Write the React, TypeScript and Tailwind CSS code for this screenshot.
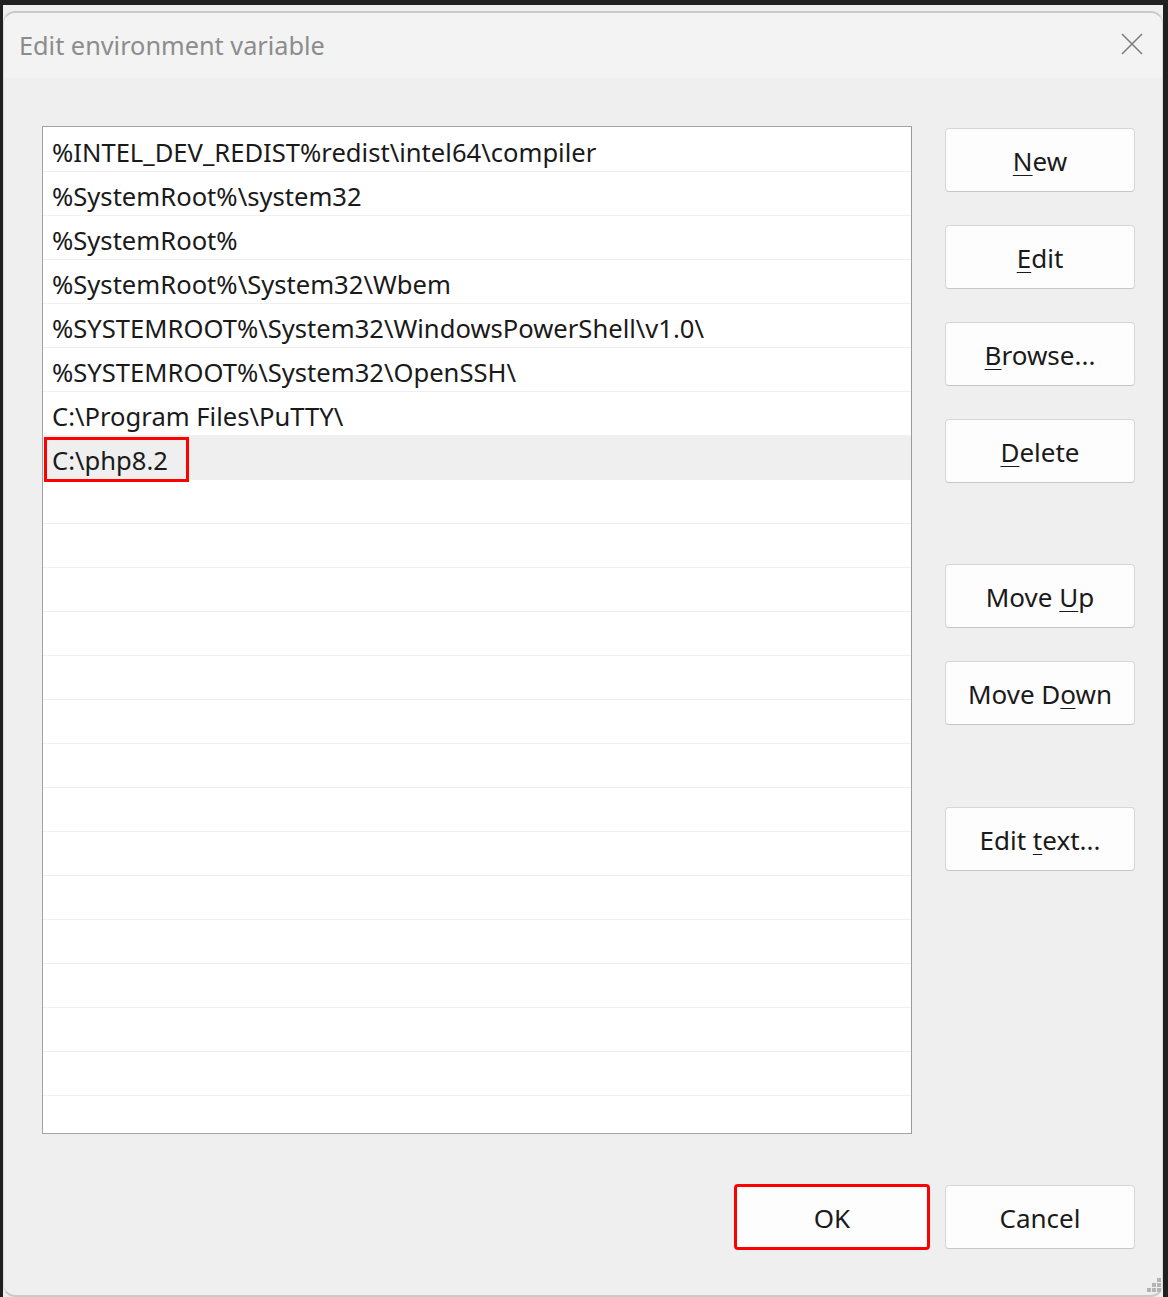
import { ReactNode } from "react";

// Edit environment variable — Windows 11 style dialog

const paths = [
  "%INTEL_DEV_REDIST%redist\\intel64\\compiler",
  "%SystemRoot%\\system32",
  "%SystemRoot%",
  "%SystemRoot%\\System32\\Wbem",
  "%SYSTEMROOT%\\System32\\WindowsPowerShell\\v1.0\\",
  "%SYSTEMROOT%\\System32\\OpenSSH\\",
  "C:\\Program Files\\PuTTY\\",
  "C:\\php8.2",
];

const TOTAL_ROWS = 23;
const SELECTED = 7;

function WinButton({
  children,
  className = "",
}: {
  children: ReactNode;
  className?: string;
}) {
  return (
    <button
      className={`flex h-[64px] w-[190px] items-center justify-center rounded-[4px] border border-[#d6d6d6] border-b-[#c6c6c6] bg-[#fdfdfd] pt-[3px] text-[26px] text-[#1a1a1a] ${className}`}
    >
      <span className="whitespace-pre">{children}</span>
    </button>
  );
}

// underlined access key
function K({ children }: { children: ReactNode }) {
  return <span className="underline decoration-1 underline-offset-[4px]">{children}</span>;
}

export default function App() {
  const rows = Array.from({ length: TOTAL_ROWS }, (_, i) => paths[i] ?? "");

  return (
    <div
      className="h-[1297px] w-[1168px] bg-[#202020] pl-[3px] pr-[5px] pt-[5px]"
      style={{ fontFamily: '"Noto Sans", "Open Sans", sans-serif' }}
    >
      <div className="h-full bg-[#efefef] pt-[6px]">
        <div className="relative flex h-full flex-col rounded-[12px] border-x border-y-2 border-x-[#dadada] border-y-[#c9c9c9] bg-[#efefef]">
          {/* title bar */}
          <div className="flex h-[65px] items-center justify-between rounded-t-[12px] bg-[#f3f3f3] pl-[15px] pr-[19px]">
            <span className="text-[25.3px] text-[#8c8c8c]">Edit environment variable</span>
            <svg width="22" height="22" viewBox="0 0 22 22" className="mt-[-4px]">
              <path d="M1 1 L21 21 M21 1 L1 21" stroke="#7d7d7d" strokeWidth="1.6" fill="none" />
            </svg>
          </div>

          {/* body */}
          <div className="flex pl-[38px] pt-[48px]">
            <div className="h-[1008px] w-[870px] overflow-hidden border border-[#a3a3a3] border-r-[#9a9a9a] bg-white pt-[1px]">
              {rows.map((p, i) => (
                <div
                  key={i}
                  className={`relative flex h-[44px] items-center border-b border-[#f0f0f0] pl-[9px] pt-[8px] text-[25.6px] text-[#1a1a1a] ${
                    i === SELECTED ? "bg-[#efefef]" : ""
                  }`}
                >
                  {p}
                  {i === SELECTED && (
                    <div className="absolute left-[1px] top-[1px] h-[45px] w-[145px] border-[3px] border-[#ff0000]" />
                  )}
                </div>
              ))}
            </div>

            <div className="ml-[33px] flex flex-col pt-[2px]">
              <WinButton>
                <K>N</K>ew
              </WinButton>
              <WinButton className="mt-[33px]">
                <K>E</K>dit
              </WinButton>
              <WinButton className="mt-[33px]">
                <K>B</K>rowse...
              </WinButton>
              <WinButton className="mt-[33px]">
                <K>D</K>elete
              </WinButton>
              <WinButton className="mt-[81px]">
                {"Move "}
                <K>U</K>p
              </WinButton>
              <WinButton className="mt-[33px]">
                Move D<K>o</K>wn
              </WinButton>
              <WinButton className="mt-[82px]">
                {"Edit "}
                <K>t</K>ext...
              </WinButton>
            </div>
          </div>

          {/* footer */}
          <div className="flex justify-end pr-[27px] pt-[50px]">
            <WinButton className="h-[66px] w-[196px] rounded-[2px] border-[3px] border-[#ff0000] border-b-[#ff0000]">
              OK
            </WinButton>
            <WinButton className="ml-[15px] mt-[1px]">Cancel</WinButton>
          </div>

          {/* resize grip */}
          <svg
            width="14"
            height="14"
            viewBox="0 0 14 14"
            className="absolute bottom-[3px] right-[1px]"
          >
            {[
              [10, 0],
              [5, 5],
              [10, 5],
              [0, 10],
              [5, 10],
              [10, 10],
            ].map(([x, y], i) => (
              <rect key={i} x={x} y={y} width="4" height="4" fill="#b4b4b4" />
            ))}
          </svg>
        </div>
      </div>
    </div>
  );
}
